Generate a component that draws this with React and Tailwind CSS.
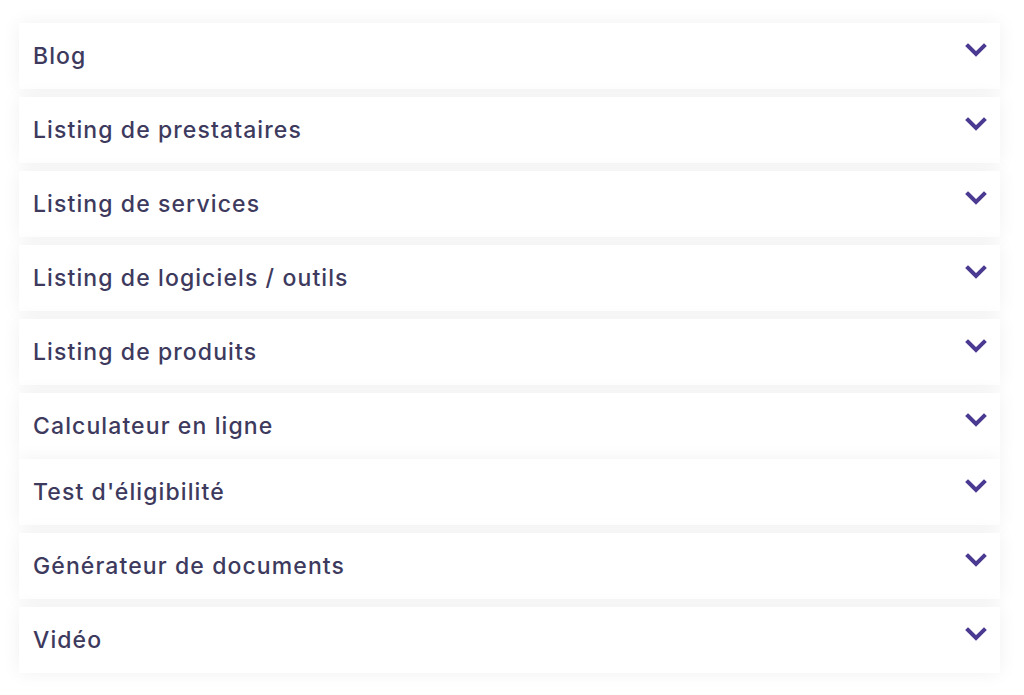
import React from "react";

const items = [
  "Blog",
  "Listing de prestataires",
  "Listing de services",
  "Listing de logiciels / outils",
  "Listing de produits",
  "Calculateur en ligne",
  "Test d'éligibilité",
  "Générateur de documents",
  "Vidéo",
];

function Chevron() {
  return (
    <svg width="22" height="14" viewBox="0 0 22 14" className="shrink-0">
      <path d="M3 3 L11 11 L19 3" fill="none" stroke="#4b3a91" strokeWidth="4" strokeLinecap="square" strokeLinejoin="miter" />
    </svg>
  );
}

export default function App() {
  return (
    <div className="min-h-[695px] w-[1024px] bg-white pt-[23px] pl-[19px] pr-[24px]" style={{ fontFamily: "Inter, 'Noto Sans', sans-serif" }}>
      <div className="flex flex-col">
        {items.map((t, i) => (
          <div
            key={t}
            className={`relative flex h-[66px] items-center justify-between bg-white pl-[14px] pr-[13px] shadow-[0_0_18px_rgba(0,0,0,0.06)] ${i === 6 ? "mt-0" : i === 0 ? "" : "mt-[8px]"}`}
          >
            <span className="text-[23px] font-medium tracking-[1.1px] text-[#3d3a5e]">{t}</span>
            <div className="self-start pt-[20px]">
              <Chevron />
            </div>
          </div>
        ))}
      </div>
    </div>
  );
}
